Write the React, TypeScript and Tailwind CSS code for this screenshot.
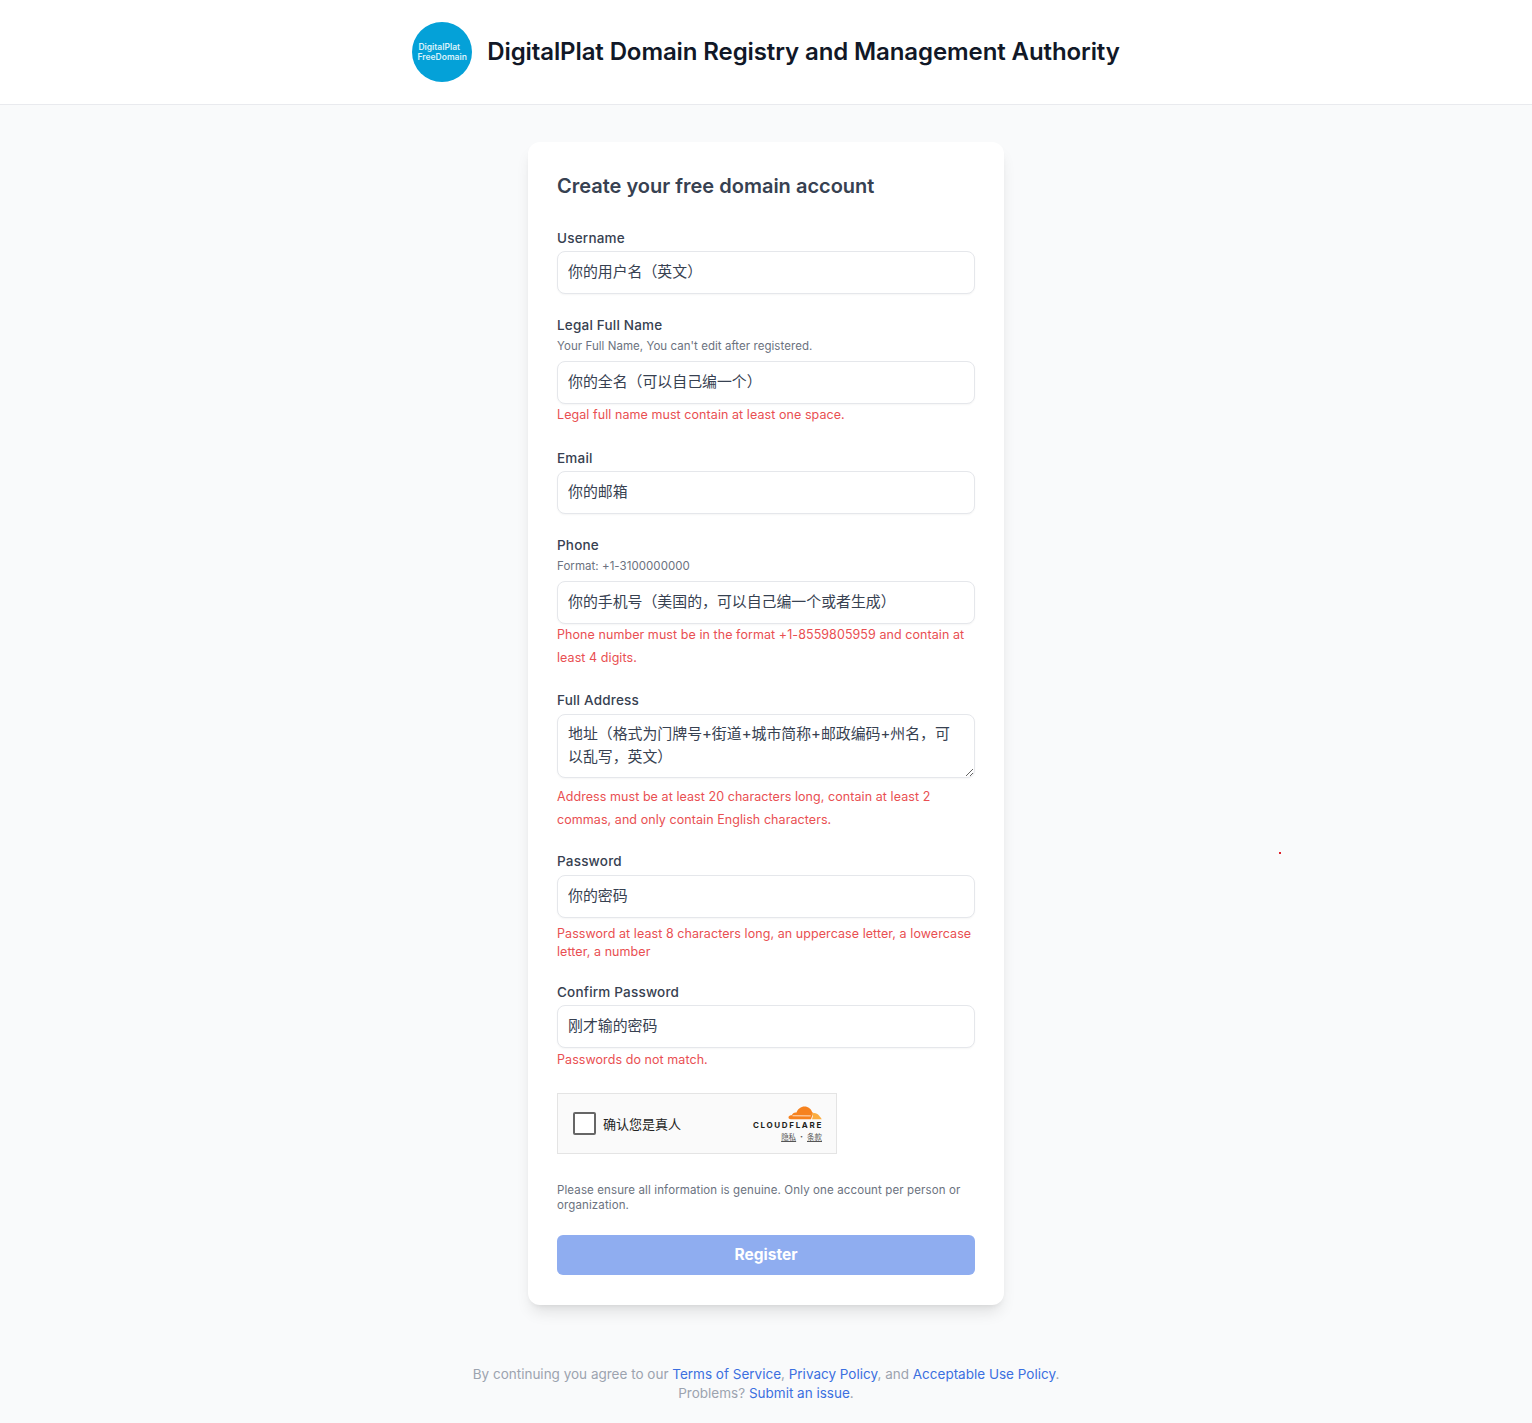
const font = "font-['Inter','Noto_Sans_CJK_SC',sans-serif]";

function Label({ children, className = "" }: { children: React.ReactNode; className?: string }) {
  return <label className={`block text-[13.5px] leading-[20px] font-medium tracking-[0.2px] text-[#374151] ${className}`}>{children}</label>;
}

function Hint({ children }: { children: React.ReactNode }) {
  return <p className="mt-px mb-[5px] text-[11.5px] leading-[20px] tracking-[0.05px] text-[#6b7280]">{children}</p>;
}

function TextInput({ value }: { value: string }) {
  return (
    <input
      readOnly
      defaultValue={value}
      className="block w-full h-[43px] px-[10px] pb-[5px] rounded-lg border border-[#e5e7eb] bg-white text-[14.9px] text-[#374151] shadow-[0_1px_2px_rgba(0,0,0,0.04)] outline-none font-['Inter','Noto_Sans_CJK_SC',sans-serif]"
    />
  );
}

function ErrorText({ children, className = "" }: { children: React.ReactNode; className?: string }) {
  return <p className={`text-[12.5px] tracking-[0.07px] text-[#e94f52] ${className}`}>{children}</p>;
}

function CloudflareMark() {
  return (
    <svg viewBox="0 0 68 30" className="w-[34px] h-[15px]" aria-hidden="true">
      <path d="M46 28.5H5.5C3 28.5 1 27 1 25c0-2.500 2.500-4.500 5-4.500 .5 0 1 .1 1.500.2C9 16.500 13 14 17 15c2.500-7 9-12 16-12 7.500 0 13.500 5 15.500 12 1-.2 1.500 0 2 .5L46 28.500z" fill="#f6821f" />
      <path d="M48 28.500l1.500-5c.7-2.500-.2-4.500-3-5l-1-.2c5-4 13-2.500 16.500 2.500 2 2.500 4 4.500 5.500 7.700H48z" fill="#fbad41" />
      <path d="M9 21.500l36.500.3" stroke="#fff" strokeWidth="1.500" fill="none" />
    </svg>
  );
}

function Turnstile() {
  return (
    <div className="mt-[23px] w-[280px] h-[61px] flex items-center justify-between pl-[15px] pr-[14px] border border-[#e4e4e4] bg-[#fafafa]">
      <div className="flex items-center gap-[7px]">
        <span className="w-[23px] h-[23px] rounded-[2px] border-2 border-[#666] bg-white" />
        <span className="text-[13px] text-[#232323] font-['Noto_Sans_CJK_SC',sans-serif]">确认您是真人</span>
      </div>
      <div className="flex flex-col items-end">
        <CloudflareMark />
        <span className="text-[8px] leading-[10px] font-bold tracking-[0.21em] mr-[-1px] text-[#1d1f20]">CLOUDFLARE</span>
        <span className="mt-[2px] text-[7.5px] leading-[10px] text-[#555] font-['Noto_Sans_CJK_SC',sans-serif]">
          <span className="underline">隐私</span> · <span className="underline">条款</span>
        </span>
      </div>
    </div>
  );
}

export default function App() {
  return (
    <div className={`relative min-h-[1423px] bg-[#f9fafb] ${font}`}>
      <header className="h-[105px] bg-white border-b border-[#e9eaee] flex items-center justify-center gap-[15px]">
        <div className="w-[60px] h-[60px] rounded-full bg-[#04a1d8] flex flex-col items-center justify-center">
          <span className="text-[8.5px] leading-[10.5px] font-semibold text-[#d9f2fb] -ml-[6px]">DigitalPlat</span>
          <span className="text-[8.5px] leading-[10.5px] font-semibold text-[#d9f2fb]">FreeDomain</span>
        </div>
        <h1 className="text-[24px] leading-[32px] font-semibold text-[#111827] tracking-[-0.1px]">
          DigitalPlat Domain Registry and Management Authority
        </h1>
      </header>

      <main className="w-[476px] mx-auto mt-[37px] h-[1163px] bg-white rounded-xl shadow-lg px-[29px] pt-[30px]">
        <h2 className="text-[20px] leading-[28px] font-semibold text-[#374151] mb-[28px]">Create your free domain account</h2>

        <Label>Username</Label>
        <div className="mt-[3px]"><TextInput value="你的用户名（英文）" /></div>

        <Label className="mt-[21px]">Legal Full Name</Label>
        <Hint>Your Full Name, You can't edit after registered.</Hint>
        <TextInput value="你的全名（可以自己编一个）" />
        <ErrorText className="mt-px leading-[20px]">Legal full name must contain at least one space.</ErrorText>

        <Label className="mt-[23px]">Email</Label>
        <div className="mt-[3px]"><TextInput value="你的邮箱" /></div>

        <Label className="mt-[21px]">Phone</Label>
        <Hint>Format: +1-3100000000</Hint>
        <TextInput value="你的手机号（美国的，可以自己编一个或者生成）" />
        <ErrorText className="leading-[22.5px]">Phone number must be in the format +1-8559805959 and contain at least 4 digits.</ErrorText>

        <Label className="mt-[21px]">Full Address</Label>
        <textarea
          readOnly
          rows={2}
          defaultValue="地址（格式为门牌号+街道+城市简称+邮政编码+州名，可以乱写，英文）"
          className="block w-full h-[64px] mt-[4px] pl-[10px] pr-[12px] py-[8px] rounded-lg border border-[#e5e7eb] bg-white text-[14.9px] leading-[22.5px] text-[#374151] shadow-[0_1px_2px_rgba(0,0,0,0.04)] outline-none font-['Inter','Noto_Sans_CJK_SC',sans-serif]"
        />
        <ErrorText className="mt-[8px] leading-[22.5px]">Address must be at least 20 characters long, contain at least 2 commas, and only contain English characters.</ErrorText>

        <Label className="mt-[20px]">Password</Label>
        <div className="mt-[4px]"><TextInput value="你的密码" /></div>
        <ErrorText className="mt-[7px] leading-[18px]">Password at least 8 characters long, an uppercase letter, a lowercase letter, a number</ErrorText>

        <Label className="mt-[21px]">Confirm Password</Label>
        <div className="mt-[3px]"><TextInput value="刚才输的密码" /></div>
        <ErrorText className="mt-[2px] leading-[20px]">Passwords do not match.</ErrorText>

        <Turnstile />

        <p className="mt-[29px] text-[11.5px] leading-[15px] tracking-[0.12px] text-[#6b7280]">
          Please ensure all information is genuine. Only one account per person or organization.
        </p>

        <button className="mt-[22px] w-full h-[40px] rounded-md bg-[#8fadf0] text-white text-[15.5px] font-bold">Register</button>
      </main>

      <footer className="mt-[60px] text-center text-[13.5px] leading-[19px] text-[#9ca3af]">
        <p>
          By continuing you agree to our <a className="text-[#3b6fe0]">Terms of Service</a>,{" "}
          <a className="text-[#3b6fe0]">Privacy Policy</a>, and <a className="text-[#3b6fe0]">Acceptable Use Policy</a>.
        </p>
        <p>
          Problems? <a className="text-[#3b6fe0]">Submit an issue</a>.
        </p>
      </footer>

      <span className="absolute left-[1279px] top-[852px] w-[2px] h-[2px] bg-[#e0202a]" />
    </div>
  );
}
